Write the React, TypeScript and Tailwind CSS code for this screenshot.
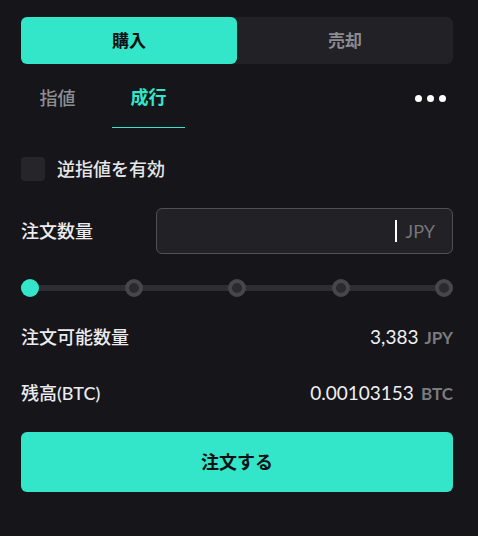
import React from "react";

const font = { fontFamily: '"Lato", "Noto Sans CJK JP", sans-serif' };
const med = { fontFamily: '"Lato", "Noto Sans CJK JP Medium", "Noto Sans CJK JP", sans-serif' };

export default function App() {
  return (
    <div
      className="w-[478px] h-[536px] bg-[#15151a] pl-[21px] pr-[25px] pt-[17px] flex flex-col"
      style={font}
    >
      {/* Buy / Sell toggle */}
      <div className="flex h-[47px] rounded-[6px] bg-[#212126]">
        <div className="w-1/2 rounded-[6px] bg-[#33e6c9] flex items-center justify-center text-[17px] font-bold text-[#111114]">
          購入
        </div>
        <div className="w-1/2 flex items-center justify-center text-[17px] font-bold text-[#8b8b90]">
          売却
        </div>
      </div>

      {/* Tabs */}
      <div className="flex items-start h-[64px]">
        <div className="w-[73px] h-full flex items-center justify-center text-[18px] font-medium text-[#8e8e93] pt-[4px]" style={med}>
          指値
        </div>
        <div className="ml-[18px] w-[73px] h-full flex items-center justify-center text-[18px] font-bold text-[#33e6c9] border-b border-[#33e6c9] pt-[4px]">
          成行
        </div>
        <div className="ml-auto h-full flex items-center gap-[5px] pr-[7px] pt-[4px]">
          <span className="w-[7px] h-[7px] rounded-full bg-white" />
          <span className="w-[7px] h-[7px] rounded-full bg-white" />
          <span className="w-[7px] h-[7px] rounded-full bg-white" />
        </div>
      </div>

      {/* Checkbox */}
      <div className="mt-[29px] flex items-center h-[24px]">
        <div className="w-[24px] h-[24px] rounded-[4px] bg-[#25252a]" />
        <span className="ml-[12px] text-[18px] font-medium text-[#e6e6e8]" style={med}>逆指値を有効</span>
      </div>

      {/* Quantity input */}
      <div className="mt-[27px] flex items-center h-[46px]">
        <span className="text-[18px] font-medium text-[#ececee]" style={med}>注文数量</span>
        <div className="ml-auto w-[297px] h-[46px] rounded-[6px] border border-[#505055] bg-[#212126] flex items-center justify-end pr-[17px]">
          <span className="w-[2px] h-[22px] bg-white" />
          <span className="ml-[9px] text-[18px] text-[#76767b]">JPY</span>
        </div>
      </div>

      {/* Slider */}
      <div className="mt-[25px] relative h-[18px] flex items-center">
        <div className="absolute left-0 right-0 h-[6px] bg-[#2d2d32]" />
        <div className="relative flex w-full justify-between">
          <span className="w-[18px] h-[18px] rounded-full bg-[#33e6c9]" />
          <span className="w-[18px] h-[18px] rounded-full border-[4px] border-[#46464b] bg-[#2a2a2f]" />
          <span className="w-[18px] h-[18px] rounded-full border-[4px] border-[#46464b] bg-[#2a2a2f]" />
          <span className="w-[18px] h-[18px] rounded-full border-[4px] border-[#46464b] bg-[#2a2a2f]" />
          <span className="w-[18px] h-[18px] rounded-full border-[4px] border-[#46464b] bg-[#2a2a2f]" />
        </div>
      </div>

      {/* Available */}
      <div className="mt-[28px] flex items-center h-[24px]">
        <span className="text-[18px] font-medium text-[#ececee]" style={med}>注文可能数量</span>
        <div className="ml-auto flex items-baseline">
          <span className="text-[19px] text-[#f0f0f2]">3,383</span>
          <span className="ml-[6px] text-[17px] font-bold text-[#7b7b80]">JPY</span>
        </div>
      </div>

      {/* Balance */}
      <div className="mt-[32px] flex items-center h-[24px]">
        <span className="text-[18px] font-medium text-[#ececee]" style={med}>残高(BTC)</span>
        <div className="ml-auto flex items-baseline">
          <span className="text-[19px] text-[#f0f0f2]">0.00103153</span>
          <span className="ml-[7px] text-[17px] font-bold text-[#7b7b80]">BTC</span>
        </div>
      </div>

      {/* Submit */}
      <button className="mt-[27px] h-[60px] w-full rounded-[6px] bg-[#33e6c9] flex items-center justify-center text-[18px] font-bold text-[#111114]">
        注文する
      </button>
    </div>
  );
}
